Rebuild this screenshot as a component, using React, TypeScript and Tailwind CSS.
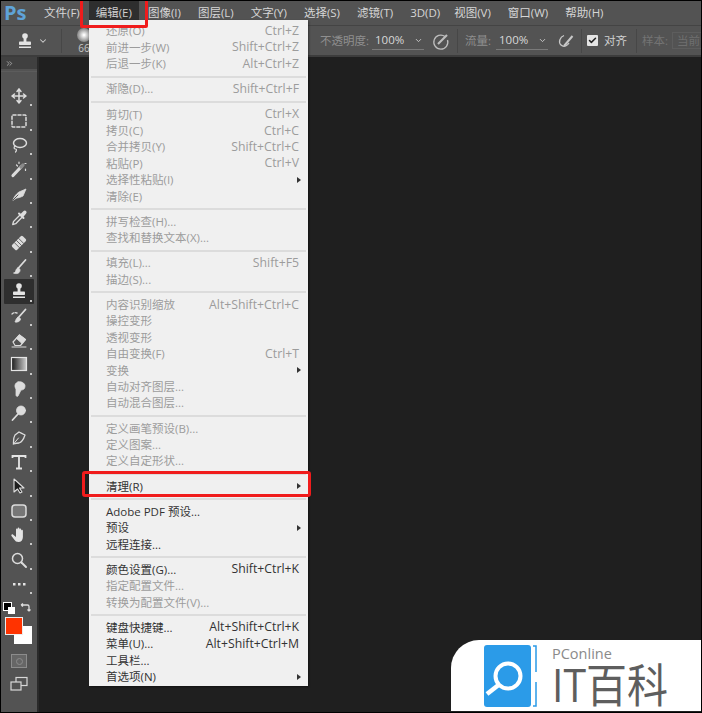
import React from 'react';
import {
  ChevronDown,
  ChevronsRight,
  Check,
} from 'lucide-react';

const CJK = "[font-family:'Open_Sans','Noto_Sans_CJK_SC',sans-serif]";

const topMenus = ['文件(F)', '编辑(E)', '图像(I)', '图层(L)', '文字(Y)', '选择(S)', '滤镜(T)', '3D(D)', '视图(V)', '窗口(W)', '帮助(H)'];

type Item = { label: string; hint?: string; on?: boolean; sub?: boolean };

const menuGroups: Item[][] = [
  [
    { label: '还原(O)', hint: 'Ctrl+Z' },
    { label: '前进一步(W)', hint: 'Shift+Ctrl+Z' },
    { label: '后退一步(K)', hint: 'Alt+Ctrl+Z' },
  ],
  [{ label: '渐隐(D)...', hint: 'Shift+Ctrl+F' }],
  [
    { label: '剪切(T)', hint: 'Ctrl+X' },
    { label: '拷贝(C)', hint: 'Ctrl+C' },
    { label: '合并拷贝(Y)', hint: 'Shift+Ctrl+C' },
    { label: '粘贴(P)', hint: 'Ctrl+V' },
    { label: '选择性粘贴(I)', sub: true },
    { label: '清除(E)' },
  ],
  [{ label: '拼写检查(H)...' }, { label: '查找和替换文本(X)...' }],
  [{ label: '填充(L)...', hint: 'Shift+F5' }, { label: '描边(S)...' }],
  [
    { label: '内容识别缩放', hint: 'Alt+Shift+Ctrl+C' },
    { label: '操控变形' },
    { label: '透视变形' },
    { label: '自由变换(F)', hint: 'Ctrl+T' },
    { label: '变换', sub: true },
    { label: '自动对齐图层...' },
    { label: '自动混合图层...' },
  ],
  [{ label: '定义画笔预设(B)...' }, { label: '定义图案...' }, { label: '定义自定形状...' }],
  [{ label: '清理(R)', on: true, sub: true }],
  [
    { label: 'Adobe PDF 预设...', on: true },
    { label: '预设', on: true, sub: true },
    { label: '远程连接...', on: true },
  ],
  [
    { label: '颜色设置(G)...', hint: 'Shift+Ctrl+K', on: true },
    { label: '指定配置文件...' },
    { label: '转换为配置文件(V)...' },
  ],
  [
    { label: '键盘快捷键...', hint: 'Alt+Shift+Ctrl+K', on: true },
    { label: '菜单(U)...', hint: 'Alt+Shift+Ctrl+M', on: true },
    { label: '工具栏...', on: true },
    { label: '首选项(N)', on: true, sub: true },
  ],
];

function Svg({ children, fill = 'none' }: { children: React.ReactNode; fill?: string }) {
  return (
    <svg width="18" height="18" viewBox="0 0 18 18" fill={fill} stroke="#dcdcdc" strokeWidth="1.5" strokeLinecap="round" strokeLinejoin="round">
      {children}
    </svg>
  );
}

function StampGlyph({ size = 18 }: { size?: number }) {
  return (
    <svg width={size} height={size} viewBox="0 0 18 18" fill="#e4e4e4">
      <circle cx="9" cy="4" r="2.8" />
      <rect x="7.6" y="5" width="2.8" height="5" />
      <rect x="3" y="9.5" width="12" height="3.5" rx="0.8" />
      <rect x="3" y="14.5" width="12" height="1.5" />
    </svg>
  );
}

const tools: React.ReactNode[] = [
  <Svg key="move"><path d="M9 2v14M2 9h14M9 2 7 4.500M9 2l2 2.500M9 16l-2-2.500M9 16l2-2.500M2 9l2.500-2M2 9l2.500 2M16 9l-2.500-2M16 9l-2.500 2" /></Svg>,
  <Svg key="marquee"><rect x="2" y="3" width="14" height="12" rx="1" strokeDasharray="3 2" /></Svg>,
  <Svg key="lasso"><ellipse cx="10" cy="7" rx="6.500" ry="4.500" /><path d="M5 10c-1.500 1.500-1 3 .5 3s1 2 0 3" strokeWidth="1.200" /></Svg>,
  <Svg key="wand"><path d="M3 15.500 11 7" strokeWidth="3.200" /><path d="m11 7 2-2" stroke="#8a8a8a" strokeWidth="3.200" /><path d="M9 2v1.500M15.500 9v1.500M6.500 5l1 1M16 3.500h-1" strokeWidth="1.200" /></Svg>,
  <Svg key="patch"><path d="M3 15c1-3 3-6 6-8l7-3-3 7c-2 1-5 2-6 2z" fill="#dcdcdc" strokeWidth="0.800" /><path d="M3 15l5-5" stroke="#535353" strokeWidth="1" /></Svg>,
  <Svg key="dropper"><path d="m10 6-6.500 6.500-.8 3 3-.8L12 8.200" strokeWidth="1.300" /><path d="m9 4.500 4.500 4.500M11.500 5.500 14 3c1-1 2.200 0 1.200 1.200L12.700 7" fill="#dcdcdc" strokeWidth="2" /></Svg>,
  <Svg key="bandage"><g transform="rotate(-45 9 9)"><rect x="1.500" y="5.500" width="15" height="7" rx="1.500" fill="#dcdcdc" stroke="none" /><path d="M6 5.500v7M9 5.500v7M12 5.500v7" stroke="#535353" strokeWidth="0.800" /></g></Svg>,
  <Svg key="brush"><path d="M15.500 2 8 10.500" strokeWidth="1.800" /><path d="M8 10c-2 .5-2 2.500-2.500 3.500-.3.800-1.500 1.500-2 1.500 2 1 6 1 6.500-2.500.2-1.200-.5-2.200-2-2.500z" fill="#dcdcdc" strokeWidth="0.800" /></Svg>,
  <StampGlyph key="stamp" />,
  <Svg key="history"><path d="M15.500 2.500 8 11" strokeWidth="1.800" /><path d="M8 10.500c-2 .5-2 2.500-3 4.500 2 .5 5-.5 5.500-2.500.2-1-.5-1.800-2.500-2z" fill="#dcdcdc" strokeWidth="0.800" /><path d="M2 7c1.500-1.500 3-1.500 5-1" strokeWidth="1.300" strokeDasharray="2 1.500" /></Svg>,
  <Svg key="eraser"><path d="m3 11 6.500-7 6 4.500-5 6H5z" strokeWidth="1.200" /><path d="m9.500 4 6 4.500-3.500 4-5.500-5z" fill="#dcdcdc" strokeWidth="0.800" /><path d="M2 16h14" strokeWidth="1" /></Svg>,
  <svg key="gradient" width="18" height="18" viewBox="0 0 18 18">
    <defs>
      <linearGradient id="grad" x1="0" x2="1" y1="0" y2="0">
        <stop offset="0" stopColor="#1a1a1a" />
        <stop offset="1" stopColor="#cfcfcf" />
      </linearGradient>
    </defs>
    <rect x="1.500" y="2.500" width="15" height="13" fill="url(#grad)" stroke="#e4e4e4" strokeWidth="1.200" />
  </svg>,
  <Svg key="smudge"><path d="M8 2c3-1 7 1 7 4s-2 4-4 4l-3 6c-1 1-2 0-2-1V9C4 6 5 3 8 2z" fill="#dcdcdc" strokeWidth="0.800" /></Svg>,
  <Svg key="dodge"><circle cx="11" cy="6.500" r="4.500" fill="#dcdcdc" strokeWidth="0.800" /><path d="M8 10 2.500 16" strokeWidth="1.800" /></Svg>,
  <Svg key="pen"><path d="M9 3c2 1 5 2.500 6 3-1 3-2.500 7-6 8-2 0-4 .5-5.500 1C3.500 12 3 9 5 6z" strokeWidth="1.300" /><path d="M3.500 15 8.500 9" strokeWidth="1" /></Svg>,
  <svg key="type" width="18" height="18" viewBox="0 0 18 18" fill="none" stroke="#e4e4e4" strokeWidth="1.800">
    <path d="M2.500 5V3h13v2M9 3v12M6 15.500h6" />
  </svg>,
  <svg key="arrow" width="18" height="18" viewBox="0 0 18 18" fill="#1e1e1e" stroke="#e0e0e0" strokeWidth="1.100" strokeLinejoin="round">
    <path d="M4 2v13l3.500-3 2.500 4 2-1-2.500-4H14z" />
  </svg>,
  <Svg key="shape"><rect x="2" y="3" width="14" height="12" rx="3" fill="#777" /></Svg>,
  <svg key="hand" width="18" height="18" viewBox="0 0 18 18" fill="#e4e4e4">
    <path d="M6 8V3.500c0-1.200 1.600-1.200 1.600 0V2.500c0-1.200 1.800-1.200 1.800 0v1c0-1.200 1.800-1.200 1.800 0v1.200c0-1.200 1.700-1.200 1.700 0V11c0 3-1.800 5-4.400 5-2 0-3.300-.8-4.300-2.500L1.500 10c-.7-1.300.8-2.200 1.700-1.200L6 11z" />
  </svg>,
  <Svg key="zoom"><circle cx="7.500" cy="7.500" r="5" /><path d="m11.500 11.500 4.500 4.500" strokeWidth="2" /></Svg>,
  <svg key="more" width="18" height="18" viewBox="0 0 18 18" fill="#e4e4e4">
    <rect x="3" y="8" width="2.500" height="2.500" />
    <rect x="8" y="8" width="2.500" height="2.500" />
    <rect x="13" y="8" width="2.500" height="2.500" />
  </svg>,
];

function Toolbar() {
  return (
    <div className="flex w-[36px] shrink-0 flex-col bg-[#535353]">
      <div className="flex h-[12px] items-center bg-[#404040] pl-[4px] text-[#bbbbbb]">
        <ChevronsRight size={9} strokeWidth={2} />
      </div>
      <div className="mt-[2px] flex flex-col gap-0 border-t border-[#5c5c5c] pt-[12px]">
        {tools.map((icon, i) => (
          <div
            key={i}
            className={`relative mx-[3px] flex h-[24.4px] items-center justify-center rounded-[1px] ${i === 8 ? 'bg-[#2e2e2e]' : ''}`}
          >
            {icon}
            <span className="absolute right-[2px] bottom-[2px] h-[2px] w-[2px] bg-[#c8c8c8]" />
          </div>
        ))}
      </div>
      <div className="relative mt-[7px] h-[44px]">
        <span className="absolute top-0 left-[3px] h-[7px] w-[7px] bg-black outline outline-1 outline-white" />
        <span className="absolute top-[4px] left-[7px] h-[7px] w-[7px] bg-white" />
        <svg className="absolute top-[-1px] left-[19px]" width="11" height="11" viewBox="0 0 11 11" fill="none" stroke="#dddddd" strokeWidth="1.300">
          <path d="M1 3h6.500c1 0 1.500 .5 1.500 1.500V9M1 3l2-1.500M1 3l2 1.500M9 9 7.500 7.500M9 9l1.500-1.500" />
        </svg>
        <span className="absolute top-[23px] left-[13px] h-[18px] w-[18px] bg-white" />
        <span className="absolute top-[14px] left-[4px] h-[18px] w-[18px] border border-[#ececec] bg-[#ff3300]" />
      </div>
      <div className="mt-[7px] flex h-[16px] justify-center">
        <span className="flex h-[14px] w-[16px] items-center justify-center border border-[#8c8c8c] bg-[#666666]">
          <span className="h-[7px] w-[7px] rounded-full border border-[#8c8c8c]" />
        </span>
      </div>
      <div className="mt-[6px] flex justify-center">
        <svg width="18" height="16" viewBox="0 0 18 16" fill="none" stroke="#d8d8d8" strokeWidth="1.200">
          <rect x="6" y="1.500" width="11" height="8" />
          <rect x="1" y="6" width="10" height="8" fill="#535353" />
        </svg>
      </div>
    </div>
  );
}

function OptionsBar() {
  return (
    <div className="flex h-[32px] shrink-0 items-center border-t border-[#444444] border-b-2 border-b-[#3c3c3c] bg-[#535353] text-[11.500px]">
      <div className="ml-[15px] flex w-[18px] justify-center">
        <StampGlyph />
      </div>
      <ChevronDown size={10} strokeWidth={2.500} className="ml-[4px] text-[#d0d0d0]" />
      <span className="ml-[13px] h-[24px] w-px bg-[#474747]" />
      <div className="ml-[13px] flex w-[18px] flex-col items-center">
        <span className="h-[14px] w-[14px] rounded-full bg-[radial-gradient(circle,#ffffff_5%,#a0a0a0_55%,#535353_100%)]" />
        <span className="text-[10px] leading-[12px] text-[#c6c6c6]">66</span>
      </div>
      <div className="ml-[227px] w-[48px] whitespace-nowrap text-[#8f8f8f]">不透明度:</div>
      <div className="ml-[4px] flex h-[18px] w-[52px] items-center justify-between border-b border-[#7a7a7a] pl-[3px] pr-[1px] text-[#d8d8d8]">
        100%
        <ChevronDown size={9} strokeWidth={2.500} className="text-[#c8c8c8]" />
      </div>
      <svg className="ml-[8px]" width="18" height="18" viewBox="0 0 18 18" fill="none" stroke="#bdbdbd" strokeWidth="1.300">
        <path d="M13 4.500A7 7 0 1 0 15.500 8" />
        <path d="M6 12 15 3" strokeWidth="2.200" />
      </svg>
      <span className="ml-[7px] h-[24px] w-px bg-[#474747]" />
      <div className="ml-[7px] w-[27px] whitespace-nowrap text-[#8f8f8f]">流量:</div>
      <div className="ml-[4px] flex h-[18px] w-[52px] items-center justify-between border-b border-[#7a7a7a] pl-[3px] pr-[1px] text-[#d8d8d8]">
        100%
        <ChevronDown size={9} strokeWidth={2.500} className="text-[#c8c8c8]" />
      </div>
      <svg className="ml-[9px]" width="18" height="16" viewBox="0 0 18 16" fill="none" stroke="#c8c8c8" strokeWidth="1.300">
        <path d="M7 2.500C3 4 1 9 4 12s7 0 8-2" />
        <path d="M7 13 15.500 3" strokeWidth="2" />
      </svg>
      <span className="ml-[6px] h-[24px] w-px bg-[#474747]" />
      <span className="ml-[5px] flex h-[11px] w-[11px] items-center justify-center rounded-[1px] bg-[#e4e4e4] text-[#222222]">
        <Check size={9} strokeWidth={4} />
      </span>
      <span className="ml-[6px] text-[#d0d0d0]">对齐</span>
      <span className="ml-[9px] h-[24px] w-px bg-[#474747]" />
      <span className="ml-[5px] whitespace-nowrap text-[#747474]">样本:</span>
      <span className="ml-[4px] flex h-[17px] min-w-0 flex-1 items-center overflow-hidden border-y border-l border-[#5d5d5d] pl-[4px] whitespace-nowrap text-[#6f6f6f]">
        当前
      </span>
    </div>
  );
}

function EditMenu() {
  return (
    <div className="absolute top-[19px] left-[88px] h-[666px] w-[219px] bg-[#f0f0f0] pt-[3px] text-[11.500px] shadow-[1px_1px_2px_rgba(0,0,0,0.4)]">
      {menuGroups.map((group, i) => (
        <div key={i}>
          {i > 0 && (
            <div className="flex h-[8.840px] items-center px-[2px]">
              <div className="h-[2px] w-full bg-[#dcdcdc]" />
            </div>
          )}
          {group.map((item) => (
            <div
              key={item.label}
              className={`relative flex h-[16.400px] items-center justify-between pr-[9px] pl-[17px] leading-none whitespace-nowrap ${item.on ? 'text-[#333333]' : 'text-[#9c9c9c]'}`}
            >
              <span>{item.label}</span>
              {item.hint && <span className="text-[12.250px]">{item.hint}</span>}
              {item.sub && (
                <span className="absolute top-[5px] right-[7px] h-0 w-0 border-y-[3.500px] border-l-[4px] border-y-transparent border-l-[#333333]" />
              )}
            </div>
          ))}
        </div>
      ))}
    </div>
  );
}

function Logo() {
  return (
    <div className="absolute right-0 bottom-[1px] flex h-[71px] w-[250px] rounded-tl-[28px] bg-white pt-[5px] pl-[33px]">
      <svg width="54" height="62" viewBox="0 0 54 62" className="shrink-0">
        <rect x="0" y="0" width="47" height="62" rx="3" fill="#2b9be8" />
        <path d="M49 1h3v26M52 37v24h-3" fill="none" stroke="#2b9be8" strokeWidth="1.500" />
        <circle cx="24" cy="31" r="12.500" fill="none" stroke="#ffffff" strokeWidth="4" />
        <path d="M14.500 40 3 49" stroke="#ffffff" strokeWidth="4.500" />
      </svg>
      <div className="ml-[14px] flex flex-col text-[#5e5e5e]">
        <span className="text-[14.500px] leading-[17px] font-medium text-[#8a8a8a] [font-family:'Open_Sans',sans-serif]">PConline</span>
        <span className="scale-y-[1.12] text-[41px] leading-[44px] whitespace-nowrap">IT百科</span>
      </div>
    </div>
  );
}

export default function App() {
  return (
    <div className={`relative flex h-[713px] w-[702px] flex-col overflow-hidden border-y border-l border-r border-black bg-[#1f1f1f] ${CJK}`}>
      <div className="flex h-[24px] shrink-0 items-center bg-[#535353] text-[11.500px] text-[#d6d6d6]">
        <span className="ml-[3px] w-[40px] text-[20px] leading-none font-bold text-[#5fa3d8]">Ps</span>
        <div className="flex">
          {topMenus.map((m, i) => (
            <span
              key={m}
              className={`flex h-[24px] items-center whitespace-nowrap ${i === 1 ? 'mr-[9px] ml-[9px] bg-[#2e2e2e] px-[7px] text-[#cfcfcf]' : i === 0 ? '' : i === 7 ? 'mr-[14px]' : 'mr-[17px]'}`}
            >
              {m}
            </span>
          ))}
        </div>
      </div>
      <OptionsBar />
      <div className="flex min-h-0 flex-1">
        <Toolbar />
        <div className="flex-1 border-l-2 border-[#2a2a2a] bg-[#1f1f1f]" />
      </div>

      <EditMenu />
      <Logo />

      <div className="absolute top-[-4px] left-[79px] h-[31px] w-[68px] rounded-[2px] border-[3px] border-[#f01c1c]" />
      <div className="absolute top-[470px] left-[81px] h-[26px] w-[229px] rounded-[3px] border-[3px] border-[#f01c1c]" />
    </div>
  );
}
